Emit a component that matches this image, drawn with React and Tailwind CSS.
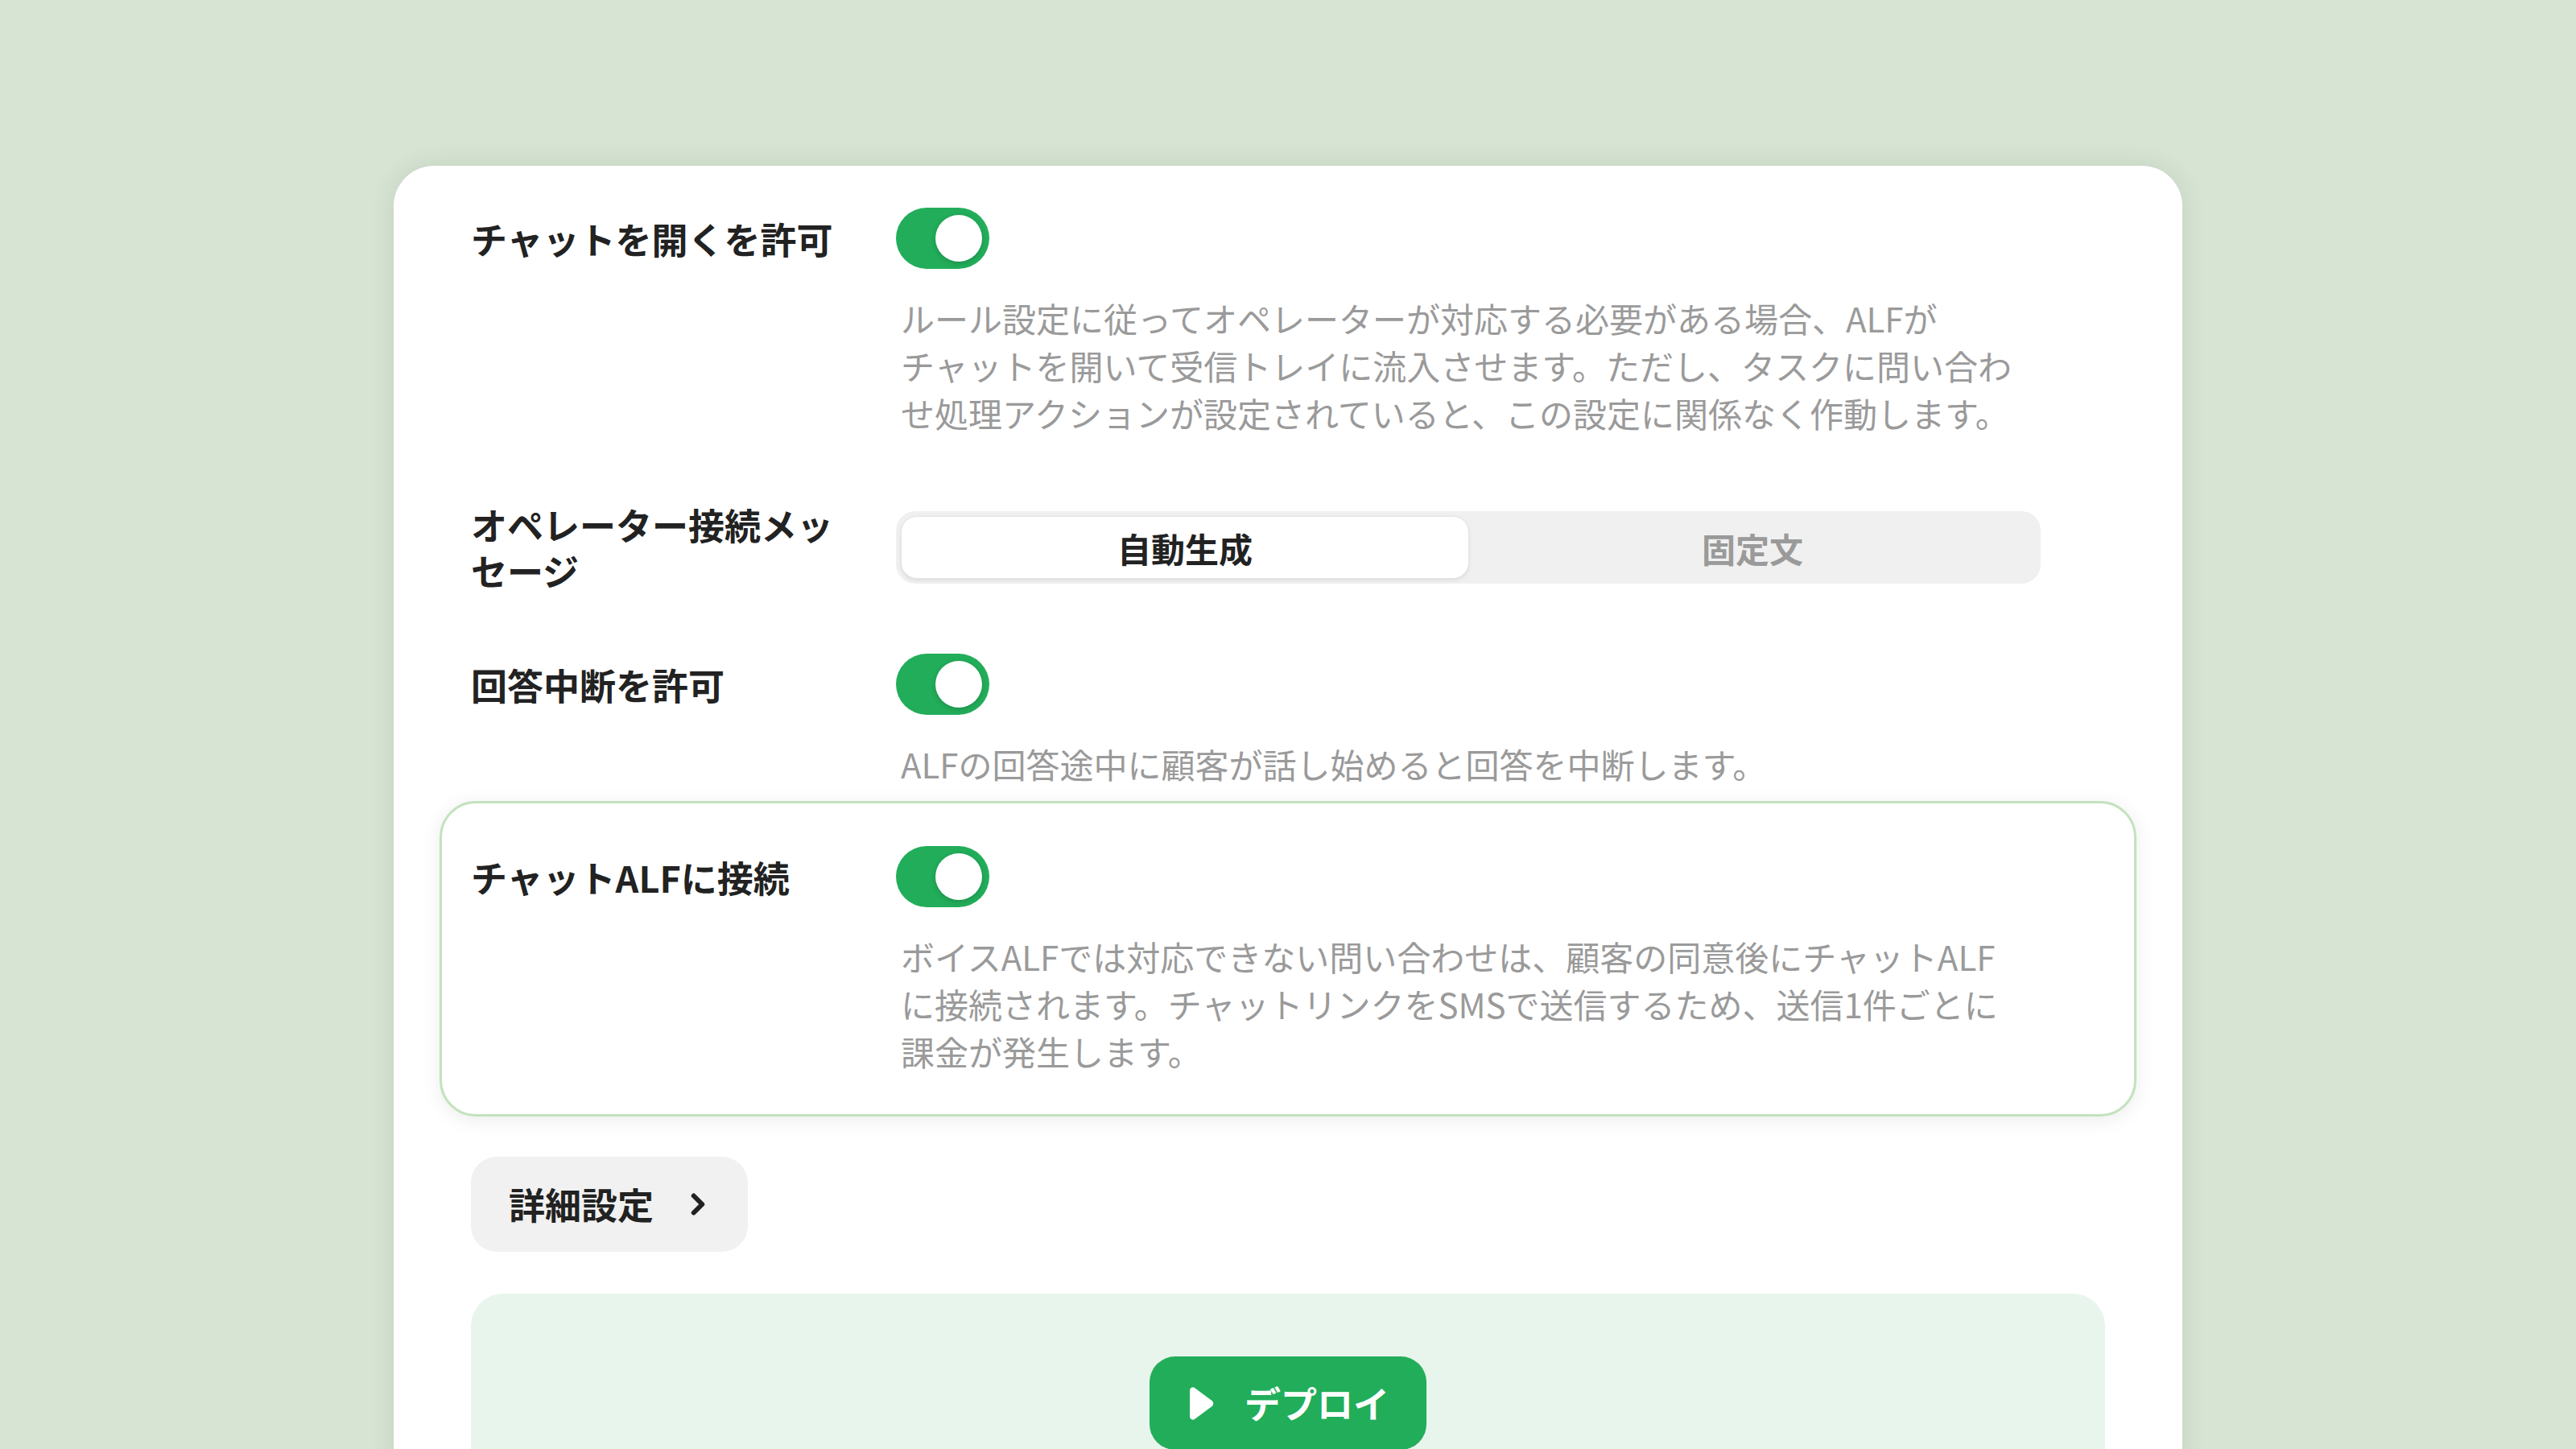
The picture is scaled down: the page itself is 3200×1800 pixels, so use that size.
import { ChevronRight } from 'lucide-react'

const FONT = { fontFamily: '"Noto Sans CJK JP", "Noto Sans", sans-serif' }

function Toggle({ on = true }) {
  return (
    <button
      type="button"
      className={`flex h-[76px] w-[116px] shrink-0 items-center rounded-full p-[9px] ${on ? 'justify-end bg-[#22ad5a]' : 'justify-start bg-[#d4d4d4]'}`}
    >
      <span className="block h-[58px] w-[58px] rounded-full bg-white shadow-[0_2px_6px_rgba(0,0,0,0.18)]" />
    </button>
  )
}

function Description({ lines }) {
  return (
    <p className="mt-[31px] w-[1422px] pl-[6px] text-[42px] leading-[59px] text-[#9a9a9a]">
      {lines.map((line, i) => (
        <span key={i}>
          {line}
          {i < lines.length - 1 && <br />}
        </span>
      ))}
    </p>
  )
}

function ToggleRow({ label, lines }) {
  return (
    <div className="flex gap-[48px]">
      <div className="flex h-[76px] w-[480px] shrink-0 items-center text-[45px] font-bold leading-[57px] text-[#222]">
        {label}
      </div>
      <div className="flex flex-col">
        <Toggle />
        <Description lines={lines} />
      </div>
    </div>
  )
}

function Segmented() {
  return (
    <div className="flex h-[90px] w-[1422px] rounded-[24px] bg-[#f0f0f0] p-[6px]">
      <div className="flex flex-1 items-center justify-center rounded-[20px] border border-[#e4e4e4] bg-white text-[42px] font-bold text-[#222] shadow-[0_2px_4px_rgba(0,0,0,0.08)]">
        自動生成
      </div>
      <div className="flex flex-1 items-center justify-center text-[42px] font-bold text-[#9a9a9a]">
        固定文
      </div>
    </div>
  )
}

function PlayIcon() {
  return (
    <svg width="36" height="45" viewBox="0 0 36 45" className="shrink-0">
      <path
        d="M4 6.5C4 3 7.6 1.2 10.3 3.2L31.5 19c2.3 1.7 2.3 5.2 0 6.9L10.3 41.8C7.6 43.8 4 42 4 38.5Z"
        fill="white"
      />
    </svg>
  )
}

export default function App() {
  return (
    <div className="h-[1800px] overflow-hidden bg-[#d7e3d3] pt-[206px]" style={FONT}>
      <div className="mx-auto w-[2222px] rounded-t-[50px] bg-white px-[96px] pb-[200px] pt-[52px] shadow-[0_0_30px_rgba(60,90,60,0.12)]">
        <ToggleRow
          label="チャットを開くを許可"
          lines={[
            'ルール設定に従ってオペレーターが対応する必要がある場合、ALFが',
            'チャットを開いて受信トレイに流入させます。ただし、タスクに問い合わ',
            'せ処理アクションが設定されていると、この設定に関係なく作動します。',
          ]}
        />

        <div className="mt-[81px] flex items-center gap-[48px]">
          <div className="w-[480px] shrink-0 text-[45px] font-bold leading-[57px] text-[#222]">
            オペレーター接続メッセージ
          </div>
          <Segmented />
        </div>

        <div className="mt-[75px]">
          <ToggleRow label="回答中断を許可" lines={['ALFの回答途中に顧客が話し始めると回答を中断します。']} />
        </div>

        <div className="-mx-[39px] mt-[17px] rounded-[45px] border-[3px] border-[#c3e2bd] px-[36px] pb-[49px] pt-[53px] shadow-[0_4px_24px_rgba(0,0,0,0.08)]">
          <ToggleRow
            label="チャットALFに接続"
            lines={[
              'ボイスALFでは対応できない問い合わせは、顧客の同意後にチャットALF',
              'に接続されます。チャットリンクをSMSで送信するため、送信1件ごとに',
              '課金が発生します。',
            ]}
          />
        </div>

        <button
          type="button"
          className="mt-[50px] flex h-[118px] w-[344px] items-center gap-[34px] rounded-[32px] bg-[#f1f1f1] pl-[47px] text-[45px] font-bold text-[#222]"
        >
          詳細設定
          <ChevronRight className="h-[42px] w-[42px] text-[#222]" strokeWidth={3.4} />
        </button>

        <div className="mt-[52px] flex h-[400px] justify-center rounded-[40px] bg-[#e8f5ec] pt-[78px]">
          <button
            type="button"
            className="flex h-[116px] w-[344px] items-center justify-center gap-[36px] rounded-[32px] bg-[#22ad5a] text-[45px] font-bold text-white"
          >
            <PlayIcon />
            デプロイ
          </button>
        </div>
      </div>
    </div>
  )
}
